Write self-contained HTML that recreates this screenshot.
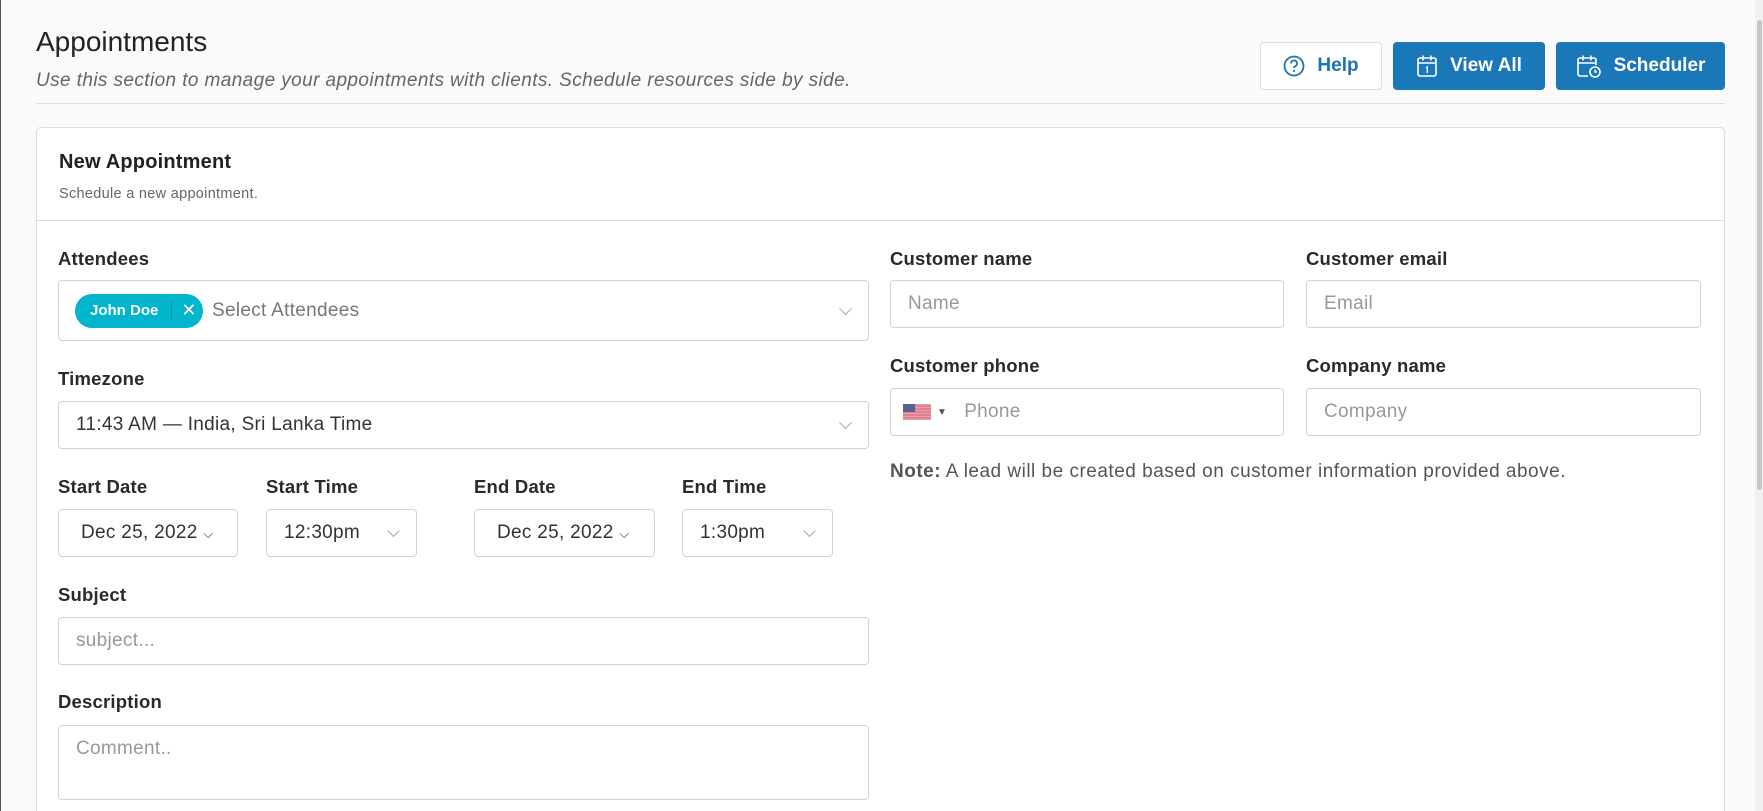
<!DOCTYPE html>
<html style="height:811px;overflow:hidden"><head><meta charset="utf-8"><style>
*{box-sizing:border-box;margin:0;padding:0}
body{width:1763px;height:811px;overflow:hidden;background:#fafafa;font-family:"Liberation Sans",sans-serif;color:#222;position:relative;border-left:1px solid #555}
.a{position:absolute}
.lbl{position:absolute;font-size:18.5px;font-weight:bold;color:#2a2a2a;letter-spacing:0.2px}
.inp{position:absolute;background:#fff;border:1px solid #d3d3d3;border-radius:4px;font-size:19px;color:#999;padding-left:17px;display:flex;align-items:center;letter-spacing:0.3px}
.val{color:#333}
.chev{position:absolute;right:18px;top:50%;width:9px;height:9px;border-right:1.5px solid #aaa;border-bottom:1.5px solid #aaa;transform:translateY(-75%) rotate(45deg)}
.btn{position:absolute;border-radius:4px;font-size:19px;font-weight:bold;display:flex;align-items:center;justify-content:center;gap:12px}
</style></head><body>
<div class="a" style="left:35px;top:26px;font-size:28px;color:#222">Appointments</div>
<div class="a" style="left:35px;top:70px;font-size:19px;font-style:italic;color:#666;letter-spacing:0.4px">Use this section to manage your appointments with clients. Schedule resources side by side.</div>
<div class="a" style="left:35px;top:103px;width:1689px;height:1px;background:#ddd"></div>
<div class="btn" style="left:1259px;top:42px;width:122px;height:48px;background:#fff;border:1px solid #ddd;color:#1a73b5">
<svg width="22" height="22" viewBox="0 0 22 22"><circle cx="11" cy="11" r="9.5" fill="none" stroke="#1a73b5" stroke-width="1.8"/><path d="M8 8.5a3 3 0 1 1 4 2.8c-.8.4-1 .9-1 1.7" fill="none" stroke="#1a73b5" stroke-width="1.8"/><circle cx="11" cy="16" r="1.1" fill="#1a73b5"/></svg>Help</div>
<div class="btn" style="left:1392px;top:42px;width:152px;height:48px;background:#1a77b8;color:#fff">
<svg width="22" height="24" viewBox="0 0 22 24"><rect x="2" y="4" width="18" height="18" rx="2" fill="none" stroke="#fff" stroke-width="1.6"/><path d="M2 9h18M7 1.5v5M15 1.5v5" stroke="#fff" stroke-width="1.6"/><path d="M10 14l1.3-1v6" stroke="#fff" stroke-width="1.3" fill="none"/></svg>View All</div>
<div class="btn" style="left:1555px;top:42px;width:169px;height:48px;background:#1a77b8;color:#fff">
<svg width="26" height="24" viewBox="0 0 26 24"><path d="M12 22H4a2 2 0 0 1-2-2V6a2 2 0 0 1 2-2h14a2 2 0 0 1 2 2v5M2 9h18M7 1.5v5M15 1.5v5" stroke="#fff" stroke-width="1.6" fill="none"/><circle cx="19" cy="18" r="5" fill="none" stroke="#fff" stroke-width="1.6"/><path d="M19 15.5V18h2" stroke="#fff" stroke-width="1.4" fill="none"/></svg>Scheduler</div>
<div class="a" style="left:1754px;top:0;width:9px;height:811px;background:#f1f1f1"></div>
<div class="a" style="left:1756px;top:20px;width:5px;height:470px;background:#c6c6c6;border-radius:3px"></div>

<div class="a" style="left:35px;top:127px;width:1689px;height:684px;background:#fff;border:1px solid #dcdcdc;border-bottom:none;border-radius:5px 5px 0 0">
<div class="a" style="left:22px;top:23px;font-size:20px;color:#222;font-weight:bold;letter-spacing:0.2px">New Appointment</div>
<div class="a" style="left:22px;top:58px;font-size:14.5px;color:#666;letter-spacing:0.3px">Schedule a new appointment.</div>
<div class="a" style="left:0;top:92px;width:1687px;height:1px;background:#dcdcdc"></div>
</div>

<div class="lbl" style="left:57px;top:248px">Attendees</div>
<div class="inp" style="left:57px;top:280px;width:811px;height:61px;padding-left:16px">
<div style="background:#00b5cc;color:#fff;border-radius:17px;height:34px;width:128px;display:flex;align-items:center;font-size:15px;font-weight:bold;padding-left:15px;letter-spacing:0">John Doe<span style="width:1px;height:18px;background:#0d8fa0;margin:0 9px 0 13px"></span><span style="font-weight:normal;font-size:18px">✕</span></div>
<span style="margin-left:9px;color:#777">Select Attendees</span><div class="chev"></div></div>

<div class="lbl" style="left:57px;top:368px">Timezone</div>
<div class="inp" style="left:57px;top:401px;width:811px;height:48px"><span class="val">11:43 AM — India, Sri Lanka Time</span><div class="chev"></div></div>

<div class="lbl" style="left:57px;top:476px">Start Date</div>
<div class="lbl" style="left:265px;top:476px">Start Time</div>
<div class="lbl" style="left:473px;top:476px">End Date</div>
<div class="lbl" style="left:681px;top:476px">End Time</div>
<div class="inp" style="left:57px;top:509px;width:180px;height:48px;padding-left:22px"><span class="val">Dec 25, 2022 <span style="font-size:13px">⌵</span></span></div>
<div class="inp" style="left:265px;top:509px;width:151px;height:48px"><span class="val">12:30pm</span><div class="chev"></div></div>
<div class="inp" style="left:473px;top:509px;width:181px;height:48px;padding-left:22px"><span class="val">Dec 25, 2022 <span style="font-size:13px">⌵</span></span></div>
<div class="inp" style="left:681px;top:509px;width:151px;height:48px"><span class="val">1:30pm</span><div class="chev"></div></div>

<div class="lbl" style="left:57px;top:584px">Subject</div>
<div class="inp" style="left:57px;top:617px;width:811px;height:48px">subject...</div>
<div class="lbl" style="left:57px;top:691px">Description</div>
<div class="inp" style="left:57px;top:725px;width:811px;height:75px;align-items:flex-start;padding-top:12px">Comment..</div>

<div class="lbl" style="left:889px;top:248px">Customer name</div>
<div class="lbl" style="left:1305px;top:248px">Customer email</div>
<div class="inp" style="left:889px;top:280px;width:394px;height:48px">Name</div>
<div class="inp" style="left:1305px;top:280px;width:395px;height:48px">Email</div>
<div class="lbl" style="left:889px;top:355px">Customer phone</div>
<div class="lbl" style="left:1305px;top:355px">Company name</div>
<div class="inp" style="left:889px;top:388px;width:394px;height:48px;padding-left:12px">
<svg width="28" height="16" viewBox="0 0 28 16"><rect width="28" height="16" fill="#e8a0a8"/><path d="M0 2h28M0 5h28M0 8h28M0 11h28M0 14h28" stroke="#d77080" stroke-width="1.2"/><rect width="12" height="8" fill="#5a5f8c"/></svg>
<span style="color:#555;font-size:10px;margin:0 17px 0 6px">▼</span><span>Phone</span></div>
<div class="inp" style="left:1305px;top:388px;width:395px;height:48px">Company</div>
<div class="a" style="left:889px;top:461px;font-size:19px;color:#555;letter-spacing:0.5px"><b>Note:</b> A lead will be created based on customer information provided above.</div>
</body></html>
